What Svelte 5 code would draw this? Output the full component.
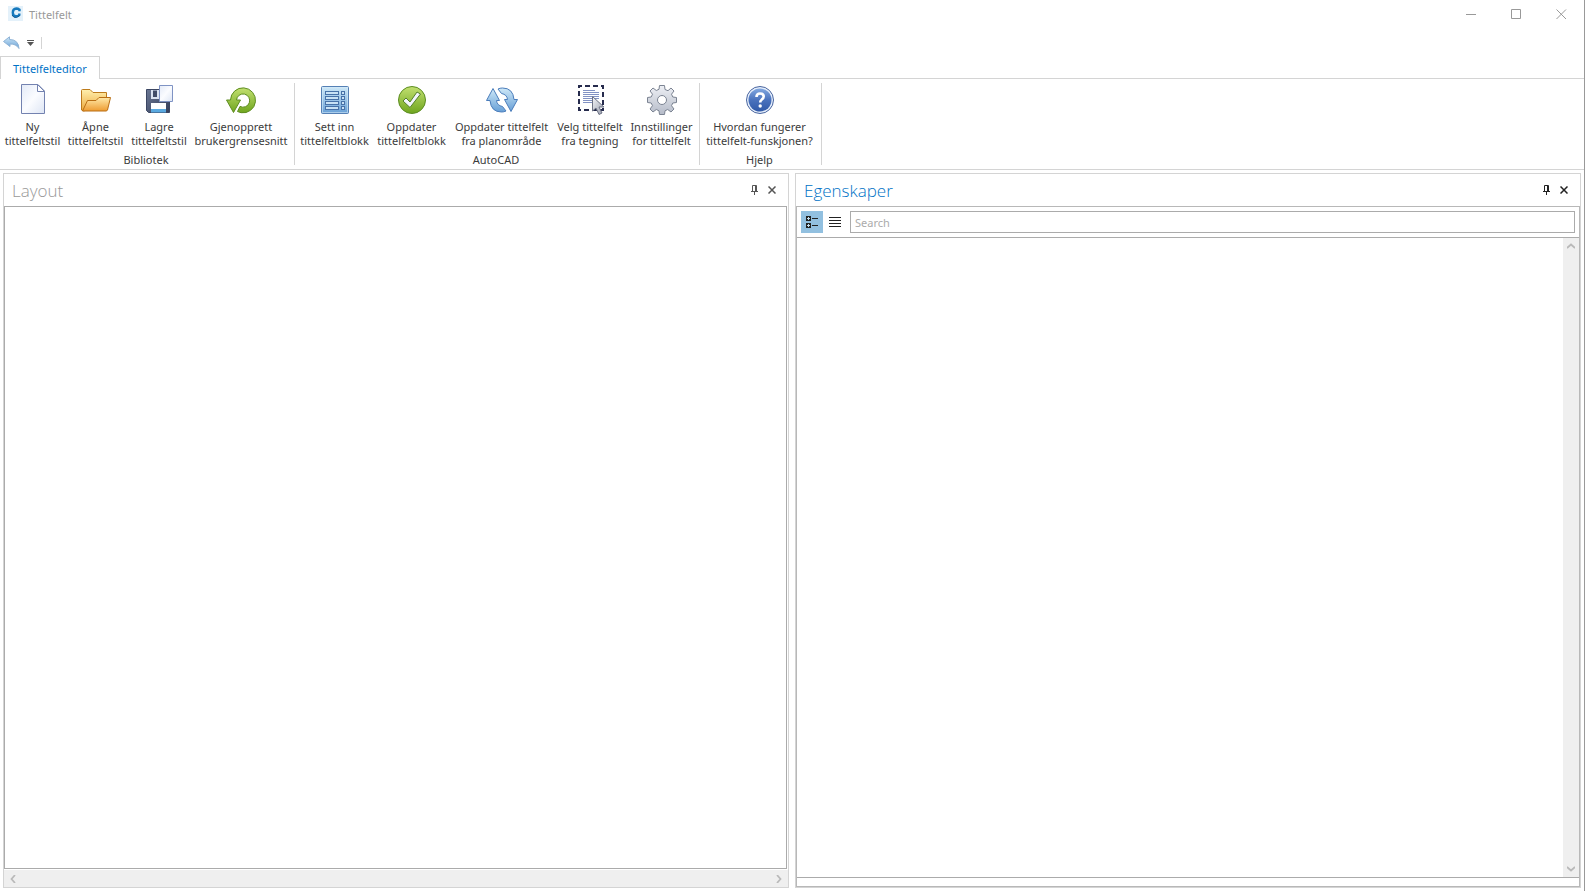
<script>
  let search = $state('');
  let view = $state('grouped');

  const groups = [
    {
      name: 'Bibliotek',
      items: [
        { icon: 'new', width: 63, lines: ['Ny', 'tittelfeltstil'] },
        { icon: 'open', width: 63, lines: ['Åpne', 'tittelfeltstil'] },
        { icon: 'save', width: 64, lines: ['Lagre', 'tittelfeltstil'] },
        { icon: 'restore', width: 100, lines: ['Gjenopprett', 'brukergrensesnitt'] }
      ]
    },
    {
      name: 'AutoCAD',
      items: [
        { icon: 'form', width: 77, lines: ['Sett inn', 'tittelfeltblokk'] },
        { icon: 'check', width: 77, lines: ['Oppdater', 'tittelfeltblokk'] },
        { icon: 'sync', width: 103, lines: ['Oppdater tittelfelt', 'fra planområde'] },
        { icon: 'select', width: 74, lines: ['Velg tittelfelt', 'fra tegning'] },
        { icon: 'gear', width: 69, lines: ['Innstillinger', 'for tittelfelt'] }
      ]
    },
    {
      name: 'Hjelp',
      items: [{ icon: 'help', width: 117, lines: ['Hvordan fungerer', 'tittelfelt-funskjonen?'] }]
    }
  ];
</script>

{#snippet ribbonIcon(name)}
  <svg class="big" viewBox="0 0 32 32" aria-hidden="true">
    {#if name === 'new'}
      <path d="M4.500.5H21L27.500 7V29.500H4.500Z" fill="url(#paper)" stroke="#7382b0" />
      <path d="M20.500.5V7.500H27.500Z" fill="#fff" stroke="#7382b0" stroke-linejoin="round" />
    {:else if name === 'open'}
      <path d="M1.500 26V6.500Q1.500 5.500 2.500 5.500H10L13 8.500H26.500V14L4 27Z" fill="url(#folderBack)" stroke="#bd7b1c" />
      <path d="M7.500 16.500H16L19 13.500H30.500L27.500 26Q27 27 26 27H2.500Z" fill="url(#folderFront)" stroke="#b96e14" stroke-linejoin="round" />
    {:else if name === 'save'}
      <path d="M3.500 5.500H26.500V28.500H5.500L3.500 26.500Z" fill="url(#disk)" stroke="#3b4663" />
      <path d="M8 6H18V15H8Z" fill="#d9e2f1" />
      <path d="M10 6.500H14V13H10Z" fill="#414c68" />
      <path d="M8 19H23V28H8Z" fill="#fff" />
      <path d="M8 25H23V28.500H8Z" fill="#5aa9e0" />
      <path d="M16.500 1.500H29.500V17.500H16.500Z" fill="url(#paper)" stroke="#7f93c4" />
    {:else if name === 'restore'}
      <path d="M1.500 16H5.500A12.500 12.500 0 1 1 16 28.700L12.500 27.500L15 22.400A6.600 6.600 0 1 0 11.500 16H15.500L8.500 28.500Z" fill="url(#green)" stroke="#5e8d20" stroke-linejoin="round" />
    {:else if name === 'form'}
      <rect x="2.500" y="2.500" width="27" height="27" rx="1" fill="url(#blue)" stroke="#5580b5" />
      <rect x="3.500" y="3.500" width="25" height="25" fill="none" stroke="#d3e9f7" stroke-opacity=".6" />
      <g fill="#c9e2f5" stroke="#4872a8">
        {#each [7.5, 12.5, 17.5, 22.5] as y}
          <rect x="6.500" {y} width="13" height="3" />
          <rect x="22.500" {y} width="3" height="3" />
        {/each}
      </g>
    {:else if name === 'check'}
      <circle cx="16" cy="16" r="13.500" fill="url(#green)" stroke="#5c8d22" />
      <path d="M7 17L10 14L14 18L21 8L24.500 10L14 23.500Z" fill="#f2f5fb" stroke="#55802b" stroke-linejoin="round" />
    {:else if name === 'sync'}
      <g fill="url(#blue)" stroke="#4b7dbb" stroke-linejoin="round">
        <path d="M.5 16.500L7 4.500L13.500 16.500H10.500Q11 21.500 16.500 22.500L20 27Q18 28 15.500 28Q5 28 4 16.500Z" />
        <path d="M31.500 15.500L25 27.500L18.500 15.500H21.500Q21 10.500 15.500 9.500L12 5Q14 4 16.500 4Q27 4 28 15.500Z" />
      </g>
    {:else if name === 'select'}
      <rect x="5" y="2" width="24" height="24" fill="none" stroke="#262b4d" stroke-width="2" stroke-dasharray="5 3" stroke-dashoffset="2" />
      <path d="M9 6.500H21M9 8.500H25M9 10.500H25M9 12.500H25M9 14.500H25M9 16.500H19M9 18.500H19" stroke="#8292c4" fill="none" />
      <path d="M18.500 12.500V27L22 24L25 30.500L28 29L25 23H30Z" fill="url(#pointer)" stroke="#6d7284" stroke-linejoin="round" />
    {:else if name === 'gear'}
      <path d="M13.500 1.500H18.500L19 5.500L22 6.700L25 4L28 7L25.500 10.200L26.800 13L30.500 13.500V18.500L26.800 19L25.500 21.700L28 25L25 28L21.700 25.500L19 26.800L18.500 30.500H13.500L13 26.800L10.300 25.500L7 28L4 25L6.500 21.700L5.200 19L1.500 18.500V13.500L5.200 13L6.500 10.200L4 7L7 4L10.300 6.500L13 5.300ZM16 11.500A4.500 4.500 0 1 0 16 20.500A4.500 4.500 0 1 0 16 11.500Z" fill="url(#steel)" stroke="#7b8392" fill-rule="evenodd" stroke-linejoin="round" />
    {:else}
      <circle cx="16" cy="16" r="13.500" fill="#e5eefb" stroke="#49659f" />
      <circle cx="16" cy="16" r="11.500" fill="url(#help)" />
      <path d="M12.500 13Q12.500 9.500 16 9.500Q19.700 9.500 19.700 12.500Q19.700 14.300 17.600 15.700Q16.200 16.700 16.200 18.500" fill="none" stroke="#fff" stroke-width="2.600" />
      <circle cx="16.200" cy="22" r="1.700" fill="#fff" />
    {/if}
  </svg>
{/snippet}

{#snippet paneButtons()}
  <div class="pane-buttons">
    <button aria-label="Fest">
      <svg width="9" height="10" viewBox="0 0 9 10" aria-hidden="true">
        <path d="M2.500 6V.5H6.500V6M1 6.500H8M4.500 7V10" fill="none" stroke="currentColor" />
        <path d="M5 1H7V6H5Z" fill="currentColor" />
      </svg>
    </button>
    <button aria-label="Lukk">
      <svg width="8" height="8" viewBox="0 0 8 8" aria-hidden="true">
        <path d="M.5.5L7.500 7.500M7.500.5L.5 7.500" stroke="currentColor" stroke-width="1.500" />
      </svg>
    </button>
  </div>
{/snippet}

{#snippet chevron(d, label)}
  <button aria-label={label}>
    <svg width="8" height="8" viewBox="0 0 8 8" aria-hidden="true">
      <path {d} fill="none" stroke="#b9b9b9" stroke-width="1.700" />
    </svg>
  </button>
{/snippet}

<svg class="defs" aria-hidden="true">
  <defs>
    <linearGradient id="paper" x1="0" y1="0" x2="1" y2="1"><stop stop-color="#e3eaf7" /><stop offset=".5" stop-color="#fbfcff" /><stop offset="1" stop-color="#dde5f4" /></linearGradient>
    <linearGradient id="folderBack" x1="0" y1="0" x2="0" y2="1"><stop stop-color="#fff0ae" /><stop offset="1" stop-color="#eda83b" /></linearGradient>
    <linearGradient id="folderFront" x1="0" y1="0" x2="0" y2="1"><stop stop-color="#ffe9a8" /><stop offset="1" stop-color="#ee9c32" /></linearGradient>
    <linearGradient id="disk" x1="0" y1="0" x2="1" y2="1"><stop stop-color="#6b7794" /><stop offset="1" stop-color="#343e59" /></linearGradient>
    <linearGradient id="green" x1="0" y1="0" x2="0" y2="1"><stop stop-color="#c2e070" /><stop offset="1" stop-color="#6fa51e" /></linearGradient>
    <linearGradient id="blue" x1="0" y1="0" x2="0" y2="1"><stop stop-color="#cfe9f8" /><stop offset="1" stop-color="#679fd6" /></linearGradient>
    <linearGradient id="steel" x1="0" y1="0" x2="0" y2="1"><stop stop-color="#eef0f5" /><stop offset="1" stop-color="#b5bbc8" /></linearGradient>
    <linearGradient id="pointer" x1="0" y1="0" x2="1" y2="1"><stop stop-color="#f4f5f8" /><stop offset="1" stop-color="#969bab" /></linearGradient>
    <linearGradient id="help" x1="0" y1="0" x2="0" y2="1"><stop stop-color="#82a8e0" /><stop offset=".5" stop-color="#4a72bd" /><stop offset="1" stop-color="#3059a8" /></linearGradient>
  </defs>
</svg>

<div class="window">
  <header class="titlebar">
    <svg width="16" height="16" viewBox="0 0 16 16" aria-hidden="true">
      <rect x="0" y="0" width="15" height="15" fill="#e4f1fa" />
      <path d="M11.500 5.200V3.700Q10 2.500 8.300 2.500Q4.800 2.700 4.800 6.500Q4.800 10.300 8 10.300Q10 10.300 11.300 9V7.500" fill="none" stroke="#1679bd" stroke-width="2.400" />
      <path d="M4 9Q5.500 12 8.500 11.500L11.800 9.500" fill="none" stroke="#125a94" stroke-width="1" />
    </svg>
    <span class="title">Tittelfelt</span>
    <div class="window-buttons">
      <button aria-label="Minimer"><svg width="11" height="11" viewBox="0 0 11 11"><path d="M0 5.500H10" stroke="#999" /></svg></button>
      <button aria-label="Maksimer"><svg width="11" height="11" viewBox="0 0 11 11"><path d="M.5.5H9.500V9.500H.5Z" fill="none" stroke="#999" /></svg></button>
      <button aria-label="Lukk vindu"><svg width="11" height="11" viewBox="0 0 11 11"><path d="M.5.5L10 10M10 .5L.5 10" stroke="#999" /></svg></button>
    </div>
  </header>

  <div class="quick">
    <button aria-label="Angre">
      <svg width="17" height="14" viewBox="0 0 17 14" aria-hidden="true">
        <path d="M.5 5.500L6.500.8V3.500Q15.500 3.500 16 12.500Q13 7.800 7 8V10.500Z" fill="url(#blue)" stroke="#8fb3d6" stroke-linejoin="round" />
      </svg>
    </button>
    <button aria-label="Tilpass verktøylinjen">
      <svg width="7" height="6" viewBox="0 0 7 6" aria-hidden="true"><path d="M0 0H7V1H0ZM0 2H7L3.500 6Z" fill="#555" /></svg>
    </button>
    <span class="quick-end"></span>
  </div>

  <nav class="tabs"><button class="tab">Tittelfelteditor</button></nav>

  <div class="ribbon">
    {#each groups as group}
      <section class="group">
        <div class="items">
          {#each group.items as item}
            <button class="item" style:min-width="{item.width}px">
              {@render ribbonIcon(item.icon)}
              {#each item.lines as line}<span>{line}</span>{/each}
            </button>
          {/each}
        </div>
        <div class="group-name">{group.name}</div>
      </section>
    {/each}
  </div>

  <main class="workspace">
    <section class="pane">
      <div class="pane-head"><h2>Layout</h2>{@render paneButtons()}</div>
      <div class="canvas"></div>
      <div class="hscroll">
        {@render chevron('M6 0L2.500 4L6 8', 'Rull til venstre')}
        {@render chevron('M2 0L5.500 4L2 8', 'Rull til høyre')}
      </div>
    </section>

    <section class="pane active">
      <div class="pane-head"><h2>Egenskaper</h2>{@render paneButtons()}</div>
      <div class="props">
        <div class="toolbar">
          <button class="view" class:on={view === 'grouped'} aria-label="Grupper" onclick={() => (view = 'grouped')}>
            <svg width="12" height="12" viewBox="0 0 12 12" aria-hidden="true">
              <path d="M0 0H5V5H0ZM0 7H5V12H0Z" fill="#222" />
              <path d="M2.500 1V4M1 2.500H4M2.500 8V11M1 9.500H4" stroke="#c5dff0" />
              <path d="M6 2.500H12M6 9.500H12" stroke="#222" />
            </svg>
          </button>
          <button class="view" class:on={view === 'list'} aria-label="Liste" onclick={() => (view = 'list')}>
            <svg width="12" height="10" viewBox="0 0 12 10" aria-hidden="true">
              <path d="M0 .5H12M0 3.500H12M0 6.500H12M0 9.500H12" stroke="#222" />
            </svg>
          </button>
          <input type="text" placeholder="Search" aria-label="Search" bind:value={search} />
        </div>
        <div class="list">
          <div class="vscroll">
            {@render chevron('M0 6L4 2.500L8 6', 'Rull opp')}
            {@render chevron('M0 2L4 5.500L8 2', 'Rull ned')}
          </div>
        </div>
        <div class="description"></div>
      </div>
    </section>
  </main>
</div>

<style>
  :global(body) {
    margin: 0;
    background: #fff;
  }
  .window {
    box-sizing: border-box;
    min-height: 100vh;
    display: flex;
    flex-direction: column;
    border-right: 1px solid #999;
    color: #3b3b3b;
    font: 11px/14px 'Noto Sans', sans-serif;
  }
  .defs {
    position: absolute;
    width: 0;
    height: 0;
  }
  svg {
    display: block;
  }
  button {
    display: flex;
    align-items: center;
    justify-content: center;
    padding: 0;
    border: 0;
    background: none;
    color: inherit;
    font: inherit;
  }
  .titlebar {
    display: flex;
    align-items: center;
    height: 28px;
    padding-left: 8px;
    gap: 5px;
    color: #999;
  }
  .title {
    padding-top: 2px;
  }
  .window-buttons {
    display: flex;
    margin-left: auto;
  }
  .window-buttons button {
    width: 45px;
    height: 28px;
  }
  .quick {
    box-sizing: border-box;
    display: flex;
    align-items: center;
    height: 28px;
    padding: 2px 0 0 3px;
    gap: 7px;
  }
  .quick-end {
    width: 1px;
    height: 12px;
    background: #d4d4d4;
  }
  .tabs {
    display: flex;
    height: 22px;
    border-bottom: 1px solid #d4d4d4;
  }
  .tab {
    box-sizing: border-box;
    height: 23px;
    padding: 1px 12px 0;
    border: 1px solid #d4d4d4;
    border-bottom: 0;
    background: #fff;
    color: #0072c6;
  }
  .ribbon {
    display: flex;
    height: 82px;
    padding: 4px 0;
    border-bottom: 1px solid #d4d4d4;
  }
  .group {
    display: flex;
    flex-direction: column;
    padding: 0 3px 0 1px;
    border-right: 1px solid #d4d4d4;
  }
  .items {
    display: flex;
    flex: none;
    height: 70px;
  }
  .item {
    flex-direction: column;
    justify-content: flex-start;
    padding: 1px 3px 0;
    white-space: nowrap;
  }
  .big {
    width: 32px;
    height: 32px;
    margin-bottom: 4px;
  }
  .group-name {
    text-align: center;
  }
  .workspace {
    flex: 1;
    display: grid;
    grid-template-columns: 1fr 1fr;
    gap: 6px;
    padding: 3px;
  }
  .pane {
    display: flex;
    flex-direction: column;
    border: 1px solid #d4d4d4;
  }
  .pane-head {
    display: flex;
    align-items: center;
    justify-content: space-between;
    height: 32px;
    padding: 0 12px 0 8px;
    color: #555;
  }
  h2 {
    margin: 0;
    padding-top: 2px;
    color: #999;
    font: 300 17px/24px 'Open Sans', sans-serif;
  }
  .pane-buttons {
    display: flex;
    align-items: center;
    gap: 9px;
  }
  .active .pane-head {
    color: #222;
  }
  .active h2 {
    color: #0072c6;
  }
  .canvas {
    flex: 1;
    margin-right: 1px;
    border: 1px solid #ababab;
  }
  .hscroll,
  .vscroll {
    display: flex;
    justify-content: space-between;
    background: #efefef;
  }
  .hscroll {
    height: 17px;
    margin-top: 1px;
    padding: 0 5px;
  }
  .props {
    flex: 1;
    display: flex;
    flex-direction: column;
    border: 1px solid #b8b8b8;
  }
  .toolbar {
    display: flex;
    padding: 4px;
    border-bottom: 1px solid #ababab;
  }
  .view {
    width: 22px;
    height: 22px;
    margin-right: 1px;
  }
  .on {
    background: #92c0e0;
  }
  input {
    box-sizing: border-box;
    flex: 1;
    min-width: 0;
    height: 22px;
    margin-left: 3px;
    padding: 0 4px;
    border: 1px solid #ababab;
    border-radius: 0;
    background: #fff;
    color: #3b3b3b;
    font: inherit;
  }
  input::placeholder {
    color: #ababab;
  }
  .list {
    flex: 1;
    display: flex;
    justify-content: flex-end;
  }
  .vscroll {
    flex-direction: column;
    width: 16px;
    padding: 4px 0;
  }
  .vscroll button {
    width: 16px;
  }
  .description {
    height: 8px;
    border-top: 1px solid #ababab;
  }
</style>
